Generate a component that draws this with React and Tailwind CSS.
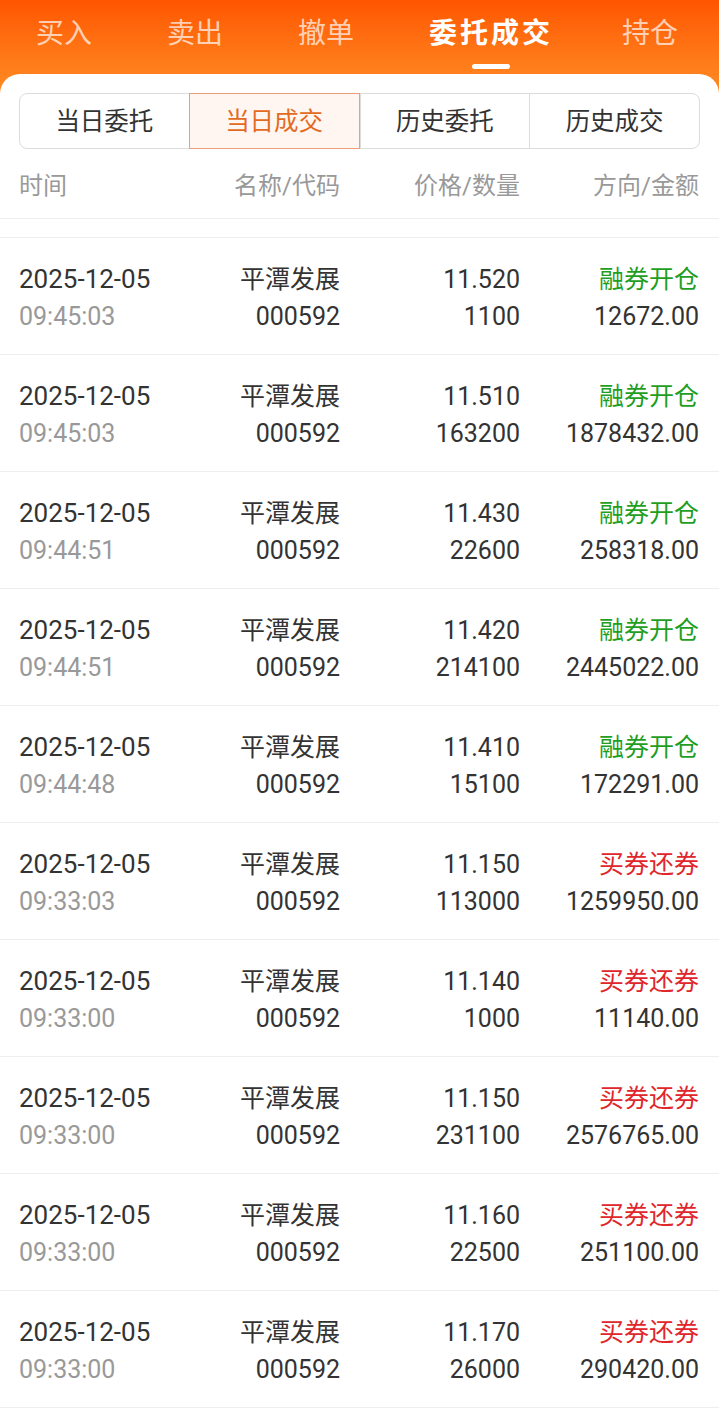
import { useState } from 'react';

const topTabs = ['买入', '卖出', '撤单', '委托成交', '持仓'];
const subTabs = ['当日委托', '当日成交', '历史委托', '历史成交'];

const rows = [
  { date: '2025-12-05', time: '09:45:03', price: '11.520', qty: '1100', dir: '融券开仓', amount: '12672.00' },
  { date: '2025-12-05', time: '09:45:03', price: '11.510', qty: '163200', dir: '融券开仓', amount: '1878432.00' },
  { date: '2025-12-05', time: '09:44:51', price: '11.430', qty: '22600', dir: '融券开仓', amount: '258318.00' },
  { date: '2025-12-05', time: '09:44:51', price: '11.420', qty: '214100', dir: '融券开仓', amount: '2445022.00' },
  { date: '2025-12-05', time: '09:44:48', price: '11.410', qty: '15100', dir: '融券开仓', amount: '172291.00' },
  { date: '2025-12-05', time: '09:33:03', price: '11.150', qty: '113000', dir: '买券还券', amount: '1259950.00' },
  { date: '2025-12-05', time: '09:33:00', price: '11.140', qty: '1000', dir: '买券还券', amount: '11140.00' },
  { date: '2025-12-05', time: '09:33:00', price: '11.150', qty: '231100', dir: '买券还券', amount: '2576765.00' },
  { date: '2025-12-05', time: '09:33:00', price: '11.160', qty: '22500', dir: '买券还券', amount: '251100.00' },
  { date: '2025-12-05', time: '09:33:00', price: '11.170', qty: '26000', dir: '买券还券', amount: '290420.00' },
];

const cols = 'grid grid-cols-[181px_140px_180px_179px]';

export default function App() {
  const [tab, setTab] = useState(3);
  const [sub, setSub] = useState(1);

  return (
    <div className="min-h-[1418px] bg-white font-['Roboto','Noto_Sans_CJK_SC',sans-serif]">
      {/* Top tabs */}
      <div className="h-[94px] bg-gradient-to-b from-[#ff5500] to-[#ff8c22]">
        <div className="flex h-[74px] items-start gap-[75px] pl-[36px]">
          {topTabs.map((t, i) => (
            <button
              key={t}
              onClick={() => setTab(i)}
              className={`flex h-[74px] flex-col items-center pt-[13px] ${i === 4 ? '-ml-[6px]' : ''}`}
            >
              <span
                className={`text-[28px] leading-[42px] ${
                  tab === i ? 'font-bold tracking-[3px] text-white' : 'text-white/70'
                }`}
              >
                {t}
              </span>
              {tab === i && <span className="mt-[9px] h-[5px] w-[38px] rounded-full bg-white" />}
            </button>
          ))}
        </div>
      </div>

      {/* Card */}
      <div className="-mt-[20px] rounded-t-[20px] bg-white pt-[19px]">
        {/* Segmented control */}
        <div className="mx-[19px] flex h-[56px] rounded-[8px] border border-[#dcdcdc]">
          {subTabs.map((t, i) => (
            <button
              key={t}
              onClick={() => setSub(i)}
              className={`flex-1 pt-[3px] text-[24.5px] ${i > 0 ? 'border-l border-[#dcdcdc]' : ''} ${
                sub === i ? 'border border-[#eba07a] bg-[#fff6f1] text-[#e36a22] -my-px' : 'text-[#333]'
              } ${i === 0 ? 'rounded-l-[8px]' : ''} ${i === 3 ? 'rounded-r-[8px]' : ''}`}
            >
              {t}
            </button>
          ))}
        </div>

        {/* Header */}
        <div className={`${cols} h-[70px] items-center border-b border-[#eeeeee] px-[19px] pt-[4px] text-[24px] text-[#999]`}>
          <span>时间</span>
          <span className="text-right">名称/代码</span>
          <span className="text-right">价格/数量</span>
          <span className="text-right">方向/金额</span>
        </div>
        <div className="h-[19px] border-b border-[#eeeeee]" />

        {/* Rows */}
        {rows.map((r, i) => (
          <div
            key={i}
            className={`${cols} border-b border-[#eeeeee] px-[19px] pt-[23px] pb-[19px] text-[25px] leading-[37px] text-[#333]`}
          >
            <div className="flex flex-col">
              <span className="text-[26px]">{r.date}</span>
              <span className="text-[#999]">{r.time}</span>
            </div>
            <div className="flex flex-col items-end">
              <span>平潭发展</span>
              <span>000592</span>
            </div>
            <div className="flex flex-col items-end">
              <span>{r.price}</span>
              <span>{r.qty}</span>
            </div>
            <div className="flex flex-col items-end">
              <span className={r.dir === '融券开仓' ? 'text-[#1f9e1f]' : 'text-[#e0262b]'}>{r.dir}</span>
              <span>{r.amount}</span>
            </div>
          </div>
        ))}
      </div>
    </div>
  );
}
